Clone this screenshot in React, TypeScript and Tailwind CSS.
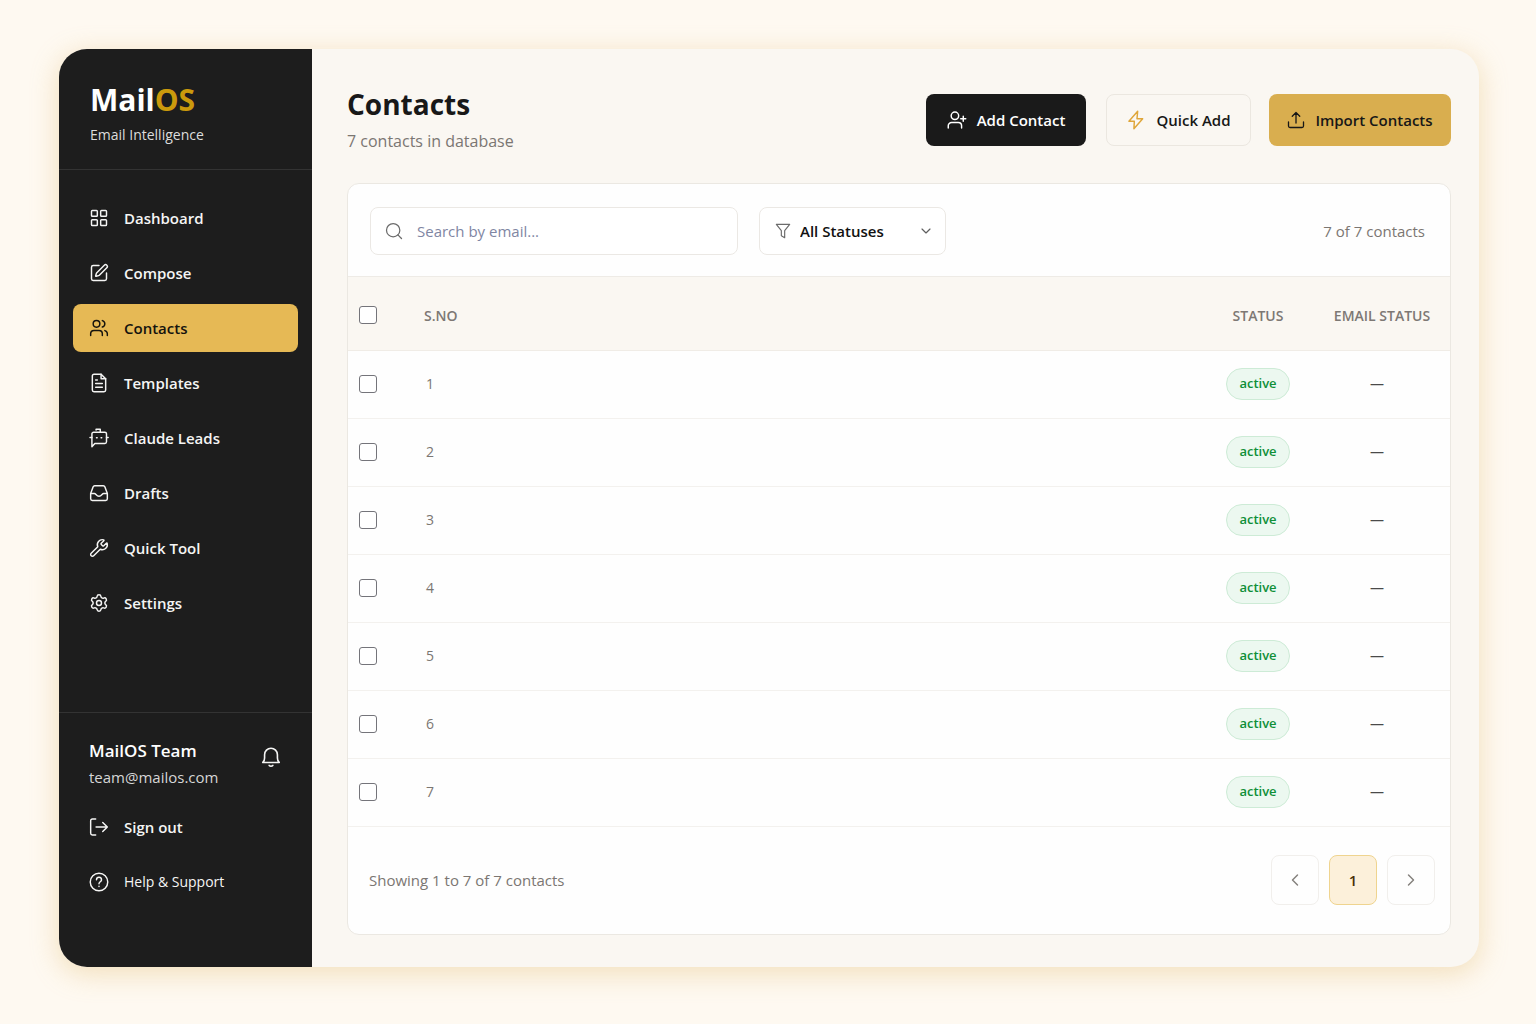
import { useState } from 'react'
import type { ReactNode } from 'react'
import {
  ChevronDown,
  ChevronLeft,
  ChevronRight,
  LayoutGrid,
  Search,
  Settings,
  SquarePen,
  Users,
  Wrench,
} from 'lucide-react'

function Glyph({ size = 20, children }: { size?: number; children: ReactNode }) {
  return (
    <svg
      width={size}
      height={size}
      viewBox="0 0 24 24"
      fill="none"
      stroke="currentColor"
      strokeWidth="1.75"
      strokeLinecap="round"
      strokeLinejoin="round"
      className="shrink-0"
      aria-hidden="true"
    >
      {children}
    </svg>
  )
}

const navItems = [
  { label: 'Dashboard', icon: <LayoutGrid size={20} strokeWidth={1.75} /> },
  { label: 'Compose', icon: <SquarePen size={20} strokeWidth={1.75} /> },
  { label: 'Contacts', icon: <Users size={20} strokeWidth={1.75} />, active: true },
  {
    label: 'Templates',
    icon: (
      <Glyph>
        <path d="M14.5 1.500H6a2 2 0 0 0-2 2v17a2 2 0 0 0 2 2h12a2 2 0 0 0 2-2V7z" />
        <path d="M14.5 1.500V7H20M8 8.500h2M8 12.500h8M8 17h8" />
      </Glyph>
    ),
  },
  {
    label: 'Claude Leads',
    icon: (
      <Glyph>
        <path d="M3.500 22.500V7a2 2 0 0 1 2-2h13.500a2 2 0 0 1 2 2v9.500a2 2 0 0 1-2 2H7z" />
        <path d="M8.500 2.500V1.500h5V5M1.200 11.500h2.300M21 11.500h2M9 11.800h.8M14.500 11.800h.8" />
      </Glyph>
    ),
  },
  {
    label: 'Drafts',
    icon: (
      <Glyph>
        <path d="M2 12.500 5 4.500a2 2 0 0 1 1.800-1.300h10.400A2 2 0 0 1 19 4.500l3 8V19a2 2 0 0 1-2 2H4a2 2 0 0 1-2-2z" />
        <path d="M2 12.500h4.500c1.700 0 2.300 3.500 5.500 3.500s3.800-3.500 5.500-3.500H22" />
      </Glyph>
    ),
  },
  { label: 'Quick Tool', icon: <Wrench size={20} strokeWidth={1.75} /> },
  { label: 'Settings', icon: <Settings size={20} strokeWidth={1.75} /> },
]

const contacts = [1, 2, 3, 4, 5, 6, 7].map((id) => ({ id, status: 'active', emailStatus: '—' }))

function Sidebar() {
  return (
    <aside className="w-[253px] shrink-0 flex flex-col bg-[#1d1d1d] text-[15px] text-[#f5f5f4]">
      <div className="h-[121px] px-[31px] pt-8 border-b border-[#333333]">
        <div className="text-[30px] leading-[38px] font-bold text-white">
          Mail<span className="text-[#cb9a0c]">OS</span>
        </div>
        <p className="mt-1 text-sm leading-6 text-[#dcdcdc]">Email Intelligence</p>
      </div>

      <nav className="flex-1 px-3.5 pt-6 flex flex-col gap-[7px]">
        {navItems.map((item) => (
          <a
            key={item.label}
            href="#"
            className={
              item.active
                ? 'h-12 px-4 flex items-center gap-[15px] rounded-lg bg-[#e6b955] text-[#15130e] font-semibold'
                : 'h-12 px-4 flex items-center gap-[15px] rounded-lg font-semibold'
            }
          >
            {item.icon}
            {item.label}
          </a>
        ))}
      </nav>

      <div className="h-[255px] px-[30px] pt-[26px] border-t border-[#333333]">
        <div className="flex items-center justify-between">
          <div>
            <p className="text-[17px] leading-6 font-semibold text-white">MailOS Team</p>
            <p className="leading-7 text-[#d6d6d6]">team@mailos.com</p>
          </div>
          <button aria-label="Notifications" className="pb-4">
            <Glyph size={22}>
              <path d="M3 18h18c-1.500-1.200-2-3-2-5V9.500a7 7 0 0 0-14 0V13c0 2-.5 3.800-2 5z" />
              <path d="M10 21.200c1 1.100 3 1.100 4 0" />
            </Glyph>
          </button>
        </div>
        <button className="mt-3 h-12 flex items-center gap-[15px] font-semibold">
          <Glyph>
            <path d="M8 2.500H4a2 2 0 0 0-2 2v15a2 2 0 0 0 2 2h4M8.500 12H22M16.500 6.500 22 12l-5.500 5.500" />
          </Glyph>
          Sign out
        </button>
        <a href="#" className="mt-[7px] h-12 flex items-center gap-[15px] text-sm">
          <Glyph>
            <circle cx="12" cy="12" r="10.500" />
            <path d="M9 9.200a3 3 0 0 1 6 .3c0 2-3 2.500-3 4.500M12 17.200v.1" />
          </Glyph>
          Help &amp; Support
        </a>
      </div>
    </aside>
  )
}

function PageHeader() {
  return (
    <header className="flex items-start justify-between">
      <div>
        <h1 className="text-[28px] leading-[38px] font-bold text-[#181818]">Contacts</h1>
        <p className="mt-1.5 text-base leading-6 text-[#7b7672]">7 contacts in database</p>
      </div>
      <div className="pt-[9px] flex text-[15px] font-semibold text-[#171717]">
        <button className="h-[52px] w-40 flex items-center justify-center gap-2.5 rounded-lg bg-[#1a1a1a] text-white">
          <Glyph>
            <circle cx="9.500" cy="7" r="4.500" />
            <path d="M1.500 21.500V19a4 4 0 0 1 4-4h8a4 4 0 0 1 4 4v2.500M19.500 7.500v6M16.500 10.500h6" />
          </Glyph>
          Add Contact
        </button>
        <button className="ml-5 h-[52px] w-[145px] flex items-center justify-center gap-2.5 rounded-lg border border-[#ebe7e0]">
          <span className="text-[#dfa63a]">
            <Glyph>
              <path d="M14 1.500 3.500 13.500H10L9.500 22.500 20 10.500h-6.800z" />
            </Glyph>
          </span>
          Quick Add
        </button>
        <button className="ml-[18px] h-[52px] w-[182px] flex items-center justify-center gap-2.5 rounded-lg bg-[#d9ae4f]">
          <Glyph size={18}>
            <path d="M2 14.500V20a2 2 0 0 0 2 2h16a2 2 0 0 0 2-2v-5.500M12 16V2M7 7l5-5 5 5" />
          </Glyph>
          Import Contacts
        </button>
      </div>
    </header>
  )
}

function Toolbar() {
  return (
    <div className="h-[93px] px-[22px] pt-0.5 flex items-center border-b border-[#eeebe6] text-[15px]">
      <div className="relative w-[368px]">
        <Search
          size={20}
          strokeWidth={1.5}
          className="absolute left-3.5 top-3.5 text-[#6b6b6b] pointer-events-none"
        />
        <input
          type="search"
          aria-label="Search by email"
          placeholder="Search by email..."
          className="w-full h-12 pl-[46px] pr-4 rounded-lg border border-[#ebe8e4] bg-white outline-none placeholder:text-[#7f86a3]"
        />
      </div>
      <div className="relative ml-[21px] w-[187px]">
        <span className="absolute left-4 top-4 text-[#6b6b6b] pointer-events-none">
          <Glyph size={16}>
            <path d="M2 2h20l-7.500 9.500V22l-5-3v-7.500z" />
          </Glyph>
        </span>
        <select
          aria-label="Status filter"
          className="appearance-none w-full h-12 pl-10 pr-9 rounded-lg border border-[#ebe8e4] bg-white font-semibold text-[#111111]"
        >
          <option>All Statuses</option>
          <option>Active</option>
          <option>Unsubscribed</option>
        </select>
        <ChevronDown
          size={16}
          strokeWidth={1.75}
          className="absolute right-3 top-4 text-[#5e5e5e] pointer-events-none"
        />
      </div>
      <p className="ml-auto mr-[3px] text-[#7b7672]">7 of 7 contacts</p>
    </div>
  )
}

function Checkbox({ label, checked, onChange }: { label: string; checked: boolean; onChange: () => void }) {
  return (
    <input
      type="checkbox"
      aria-label={label}
      checked={checked}
      onChange={onChange}
      className="block appearance-none size-[18px] rounded-[3px] border border-[#74747a] bg-white checked:bg-[#d9ae4f]"
    />
  )
}

function ContactsTable() {
  const [selected, setSelected] = useState<number[]>([])
  const allSelected = selected.length === contacts.length

  const toggle = (id: number) =>
    setSelected((prev) => (prev.includes(id) ? prev.filter((x) => x !== id) : [...prev, id]))

  return (
    <table className="w-full table-fixed">
      <thead>
        <tr className="h-[73px] bg-[#faf7f2] border-b border-[#f0ece6] text-sm text-[#7d7874]">
          <th scope="col" className="w-[76px] pt-1 pl-[11px]">
            <Checkbox
              label="Select all contacts"
              checked={allSelected}
              onChange={() => setSelected(allSelected ? [] : contacts.map((c) => c.id))}
            />
          </th>
          <th scope="col" className="pt-1.5 text-left font-semibold">S.NO</th>
          <th scope="col" className="w-[124px] pt-1.5 font-semibold">STATUS</th>
          <th scope="col" className="w-[130px] pt-1.5 pr-1.5 font-semibold">EMAIL STATUS</th>
        </tr>
      </thead>
      <tbody>
        {contacts.map((c) => (
          <tr key={c.id} className="h-[68px] border-b border-[#f3f1ee]">
            <td className="pl-[11px]">
              <Checkbox label={`Select contact ${c.id}`} checked={selected.includes(c.id)} onChange={() => toggle(c.id)} />
            </td>
            <td className="pl-0.5 text-sm text-[#7b7672]">{c.id}</td>
            <td className="text-center">
              <span className="inline-flex h-8 w-16 items-center justify-center rounded-full border border-[#cdebd6] bg-[#ecf8f0] text-[13px] font-semibold text-[#0f8f38]">
                {c.status}
              </span>
            </td>
            <td className="pr-4 text-center text-sm text-[#4a4a4a]">{c.emailStatus}</td>
          </tr>
        ))}
      </tbody>
    </table>
  )
}

function Pagination() {
  return (
    <div className="h-[107px] pl-[21px] pr-[15px] flex items-center justify-between text-[15px]">
      <p className="text-[#7b7672]">Showing 1 to 7 of 7 contacts</p>
      <div className="flex gap-2.5 text-[#85817d]">
        <button aria-label="Previous page" className="h-[50px] w-12 flex items-center justify-center rounded-lg border border-[#f1efec]">
          <ChevronLeft size={20} strokeWidth={1.75} />
        </button>
        <button aria-current="page" className="h-[50px] w-12 rounded-lg border border-[#efd48f] bg-[#fcf0da] font-semibold text-[#4a300a]">
          1
        </button>
        <button aria-label="Next page" className="h-[50px] w-12 flex items-center justify-center rounded-lg border border-[#f1efec]">
          <ChevronRight size={20} strokeWidth={1.75} />
        </button>
      </div>
    </div>
  )
}

export default function App() {
  return (
    <div className="min-h-screen pt-[49px] pb-[57px] pl-[59px] pr-[57px] flex bg-[#fef9f1] font-['Open_Sans','Noto_Sans',sans-serif] text-base">
      <div className="flex-1 flex overflow-hidden rounded-[28px] bg-[#faf7f2] shadow-[0_6px_26px_2px_rgba(228,192,124,0.42)]">
        <Sidebar />
        <main className="flex-1 min-w-0 pt-9 pb-8 pl-[35px] pr-7">
          <PageHeader />
          <section className="mt-[30px] overflow-hidden rounded-xl border border-[#ebe8e2] bg-[#fefefe]">
            <Toolbar />
            <ContactsTable />
            <Pagination />
          </section>
        </main>
      </div>
    </div>
  )
}
